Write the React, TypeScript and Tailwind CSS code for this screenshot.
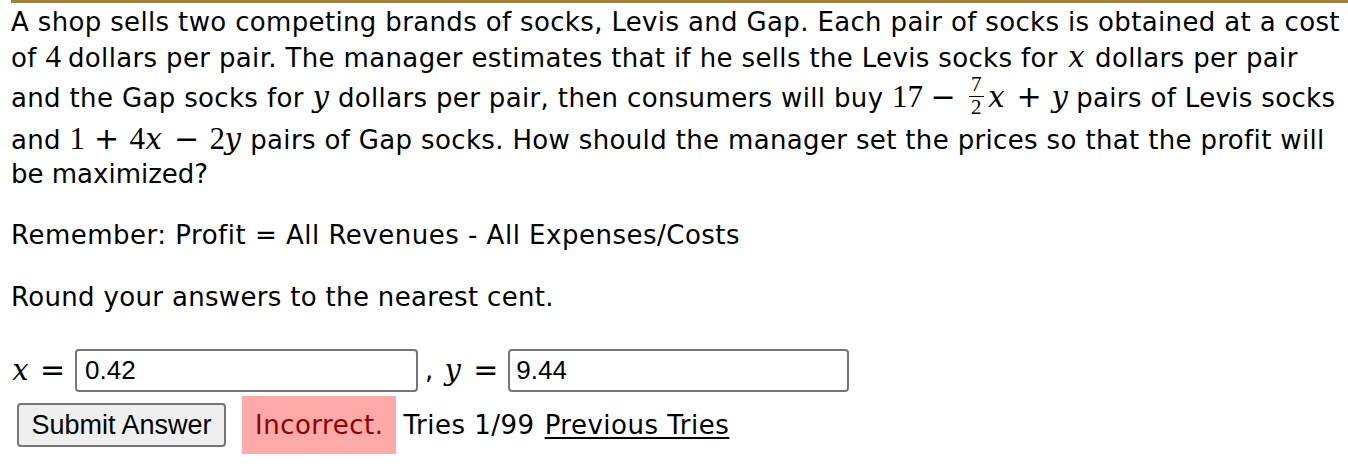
import React from "react";

const sans = "font-['Verdana','DejaVu_Sans',sans-serif]";
const digitFont = "font-['Liberation_Serif','Times_New_Roman',serif]";
const varFont = "font-['DejaVu_Serif','Liberation_Serif',serif]";
const opFont = "font-['DejaVu_Sans','Liberation_Sans',sans-serif]";

// variable, italic, in a box of fixed width
function V({ children, w = "w-[20px]" }: { children: React.ReactNode; w?: string }) {
  return (
    <span className={`${varFont} ${w} inline-block italic text-[29px] leading-none tracking-normal text-center`}>
      {children}
    </span>
  );
}

function N({ children, w = "w-[14px]" }: { children: React.ReactNode; w?: string }) {
  return (
    <span className={`${digitFont} ${w} inline-block text-[31px] leading-none tracking-normal text-center`}>
      {children}
    </span>
  );
}

function Op({ children, w = "w-[46px]" }: { children: React.ReactNode; w?: string }) {
  return (
    <span className={`${opFont} ${w} inline-block text-[30px] leading-none tracking-normal text-center`}>
      {children}
    </span>
  );
}

function Frac() {
  return (
    <span className={`${digitFont} inline-flex flex-col items-center align-middle text-[21px] leading-[21px] mx-[3px] relative top-[-3px] tracking-normal`}>
      <span className="px-[1px] pb-[1px]">7</span>
      <span className="border-t border-black px-[2px]">2</span>
    </span>
  );
}

export default function App() {
  return (
    <div className={`${sans} text-[26px] text-black bg-white min-h-[476px] w-[1348px] overflow-hidden`}>
      <div className="ml-[11px] h-[3px] bg-[#a38530]" />
      <div className="pl-[11px] pt-[2px] leading-[35px] whitespace-nowrap">
        <div className="h-[36px] tracking-[0.35px]">
          A shop sells two competing brands of socks, Levis and Gap. Each pair of socks is obtained at a cost
        </div>
        <div className="tracking-[0.35px]">
          of <N>4</N> dollars per pair. The manager estimates that if he sells the Levis socks for <V>x</V> dollars per pair
        </div>
        <div className="h-[43px] pt-[1px] tracking-[0.35px]">
          and the Gap socks for <V w="w-[17px]">y</V> dollars per pair, then consumers will buy <N w="w-[28px]">17</N>
          <Op w="w-[46px]">−</Op>
          <Frac />
          <V>x</V>
          <Op w="w-[45px]">+</Op>
          <V w="w-[16px]">y</V> pairs of Levis socks
        </div>
        <div className="h-[38px] pt-[4px] tracking-[0.35px]">
          and <N>1</N>
          <Op>+</Op>
          <N>4</N>
          <V>x</V>
          <Op>−</Op>
          <N>2</N>
          <V w="w-[18px]">y</V> pairs of Gap socks. How should the manager set the prices so that the profit will
        </div>
        <div>be maximized?</div>

        <div className="mt-[26px] tracking-[0.5px]">Remember: Profit = All Revenues - All Expenses/Costs</div>

        <div className="mt-[27px] tracking-[0.33px]">Round your answers to the nearest cent.</div>

        <div className="mt-[33px] flex items-center h-[44px]">
          <V w="w-[19px]">x</V>
          <Op w="w-[45px]">=</Op>
          <input
            readOnly
            value="0.42"
            className="w-[343px] h-[43px] border-2 border-[#767676] rounded-[4px] px-[8px] font-['Liberation_Sans','Arial',sans-serif] text-[26px] outline-none"
          />
          <span className="ml-[7px] mr-[9px]">,</span>
          <V w="w-[21px]">y</V>
          <Op w="w-[45px]">=</Op>
          <input
            readOnly
            value="9.44"
            className="w-[341px] h-[43px] border-2 border-[#767676] rounded-[4px] px-[6px] font-['Liberation_Sans','Arial',sans-serif] text-[26px] outline-none"
          />
        </div>

        <div className="mt-[4px] flex items-center tracking-[0.5px]">
          <button className="ml-[6px] w-[209px] h-[44px] bg-[#efefef] border-2 border-[#767676] rounded-[4px] font-['Liberation_Sans','Arial',sans-serif] text-[27px] leading-none tracking-normal">
            Submit Answer
          </button>
          <span className="ml-[16px] h-[58px] px-[13px] flex items-center bg-[#ffa9a9] text-[#8b0000]">
            Incorrect.
          </span>
          <span className="ml-[7px]">Tries 1/99</span>
          <a href="#" className="ml-[10px] underline text-black underline-offset-[3px]">
            Previous Tries
          </a>
        </div>
      </div>
    </div>
  );
}
